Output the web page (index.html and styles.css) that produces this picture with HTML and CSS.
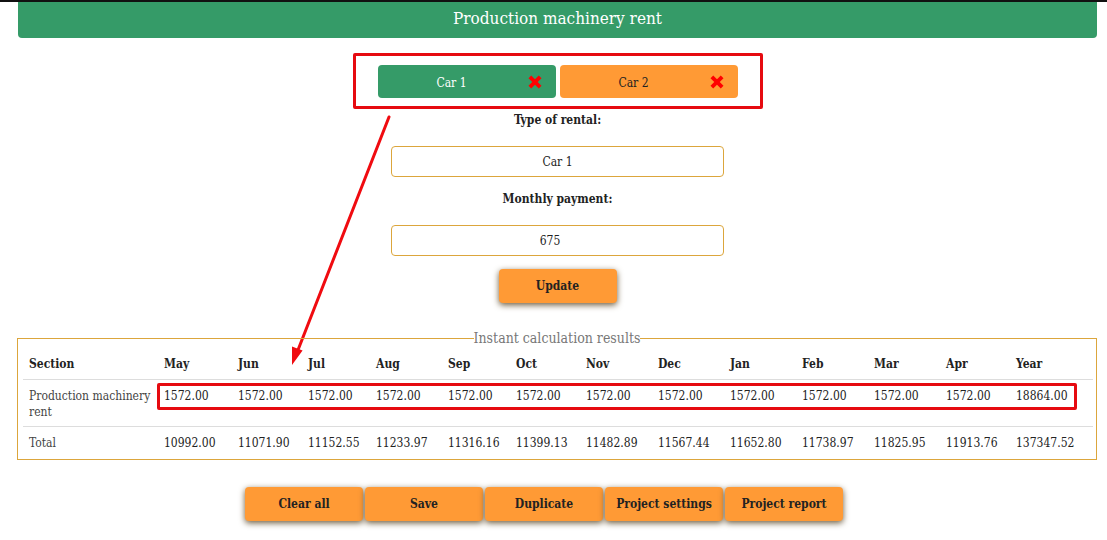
FILE: index.html
```html
<!DOCTYPE html>
<html lang="en">
<head>
<meta charset="utf-8">
<meta name="viewport" content="width=device-width, initial-scale=1">
<title>Production machinery rent</title>
<link rel="stylesheet" href="styles.css">
</head>
<body>
<main class="page">
  <h1 class="page-title">Production machinery rent</h1>

  <div class="tabs">
    <div class="tab tab-active">
      <button type="button" class="tab-name">Car 1</button>
      <button type="button" class="tab-remove" aria-label="Remove Car 1">
        <svg viewBox="0 0 14 14" class="cross"><path d="M3 3L11 11M11 3L3 11"/></svg>
      </button>
    </div>
    <div class="tab">
      <button type="button" class="tab-name">Car 2</button>
      <button type="button" class="tab-remove" aria-label="Remove Car 2">
        <svg viewBox="0 0 14 14" class="cross"><path d="M3 3L11 11M11 3L3 11"/></svg>
      </button>
    </div>
    <svg class="arrow" viewBox="0 0 100 252" aria-hidden="true">
      <path class="arrow-line" d="M98 3L7 236"/>
      <path class="arrow-head" d="M2 248L2 234L10 237Z"/>
    </svg>
  </div>

  <form class="rental">
    <label for="rental-type">Type of rental:</label>
    <input id="rental-type" type="text" value="Car 1">
    <label for="payment">Monthly payment:</label>
    <input id="payment" type="number" value="675">
    <button type="button" class="action">Update</button>
  </form>

  <fieldset class="results">
    <legend>Instant calculation results</legend>
    <table>
      <colgroup>
        <col class="c-section"><col class="c-wide"><col class="c-mid"><col class="c-slim"><col class="c-month"><col class="c-slim"><col class="c-mid"><col class="c-month"><col class="c-month"><col class="c-month"><col class="c-month"><col class="c-month"><col class="c-mid"><col class="c-year">
      </colgroup>
      <thead>
        <tr><th>Section</th><th>May</th><th>Jun</th><th>Jul</th><th>Aug</th><th>Sep</th><th>Oct</th><th>Nov</th><th>Dec</th><th>Jan</th><th>Feb</th><th>Mar</th><th>Apr</th><th>Year</th></tr>
      </thead>
      <tbody>
        <tr class="row-rent"><th scope="row">Production machinery rent</th><td>1572.00</td><td>1572.00</td><td>1572.00</td><td>1572.00</td><td>1572.00</td><td>1572.00</td><td>1572.00</td><td>1572.00</td><td>1572.00</td><td>1572.00</td><td>1572.00</td><td>1572.00</td><td>18864.00</td></tr>
        <tr><th scope="row">Total</th><td>10992.00</td><td>11071.90</td><td>11152.55</td><td>11233.97</td><td>11316.16</td><td>11399.13</td><td>11482.89</td><td>11567.44</td><td>11652.80</td><td>11738.97</td><td>11825.95</td><td>11913.76</td><td>137347.52</td></tr>
      </tbody>
    </table>
    <div class="row-mark" aria-hidden="true"></div>
  </fieldset>

  <div class="actions">
    <button type="button" class="action">Clear all</button>
    <button type="button" class="action">Save</button>
    <button type="button" class="action">Duplicate</button>
    <button type="button" class="action">Project settings</button>
    <button type="button" class="action">Project report</button>
  </div>
</main>
</body>
</html>
```
FILE: styles.css
```css
* {
  box-sizing: border-box;
}

body {
  margin: 0;
  border-top: 2px solid #111;
  background: #fff;
  color: #222;
  font: 12px/16px "Roboto Slab", "DejaVu Serif Condensed", "DejaVu Serif", serif;
}

button,
input {
  font: inherit;
  color: inherit;
}

.page {
  padding: 0 10px 18px 18px;
}

.page-title {
  margin: 0;
  padding: 4px 0 8px;
  border-radius: 0 0 4px 4px;
  background: #359b68;
  color: #fff;
  font-size: 17px;
  font-weight: 400;
  line-height: 24px;
  text-align: center;
}

.tabs {
  position: relative;
  display: flex;
  gap: 4px;
  width: fit-content;
  margin: 15px auto 0;
  padding: 9px 22px 8px;
  border: 3px solid #e60a10;
  border-radius: 2px;
}

.tab {
  display: flex;
  align-items: center;
  width: 178px;
  height: 33px;
  padding-right: 12px;
  border-radius: 4px;
  background: #ff9a35;
}

.tab-active {
  background: #359b68;
  color: #fff;
}

.tab-name,
.tab-remove {
  padding: 0;
  border: 0;
  background: none;
}

.tab-name {
  flex: 1;
  padding-top: 2px;
}

.tab-remove {
  display: flex;
}

.cross {
  width: 18px;
  height: 18px;
  fill: none;
  stroke: #f00;
  stroke-width: 3;
}

.arrow {
  position: absolute;
  top: 58px;
  left: -65px;
  width: 100px;
  height: 252px;
  pointer-events: none;
}

.arrow-line {
  fill: none;
  stroke: #f00b10;
  stroke-width: 3;
  stroke-linecap: round;
}

.arrow-head {
  fill: #f00b10;
  stroke: #f00b10;
  stroke-width: 2;
}

.rental {
  display: flex;
  flex-direction: column;
  align-items: center;
}

.rental label {
  margin: 3px 0 18px;
  font-weight: 700;
}

.rental input {
  width: 333px;
  height: 31px;
  margin-bottom: 11px;
  padding: 1px 2px;
  border: 1px solid #dca63c;
  border-radius: 4px;
  background: #fff;
  text-align: center;
}

.action {
  width: 118px;
  height: 34px;
  padding: 0;
  border: 0;
  border-radius: 4px;
  background: #ff9a35;
  box-shadow: 0 2px 6px #6b5a3c;
  font-weight: 700;
}

.rental .action {
  margin-top: 2px;
}

.results {
  position: relative;
  min-width: 0;
  margin: 25px 0 0 -1px;
  padding: 0 5px;
  border: 1px solid #dca63c;
}

.results legend {
  margin: 0 auto;
  padding: 0;
  color: #777;
  font-size: 14px;
  line-height: 20px;
}

table {
  width: 100%;
  table-layout: fixed;
  border-collapse: collapse;
}

.c-section { width: 135px; }
.c-wide { width: 74px; }
.c-mid { width: 70px; }
.c-slim { width: 68px; }
.c-month { width: 72px; }
.c-year { width: 83px; }

th,
td {
  padding: 8px 0 8px 6px;
  text-align: left;
  vertical-align: top;
}

thead th {
  padding-bottom: 7px;
}

tbody tr {
  border-top: 1px solid #ddd;
}

tbody th {
  color: #444;
  font-weight: 400;
}

.row-rent th {
  padding-bottom: 6px;
}

.row-mark {
  position: absolute;
  top: 35px;
  right: 19px;
  left: 139px;
  height: 27px;
  border: 3px solid #e60a10;
  border-radius: 2px;
}

.actions {
  display: flex;
  justify-content: center;
  gap: 2px;
  padding: 27px 27px 0 0;
}
```
